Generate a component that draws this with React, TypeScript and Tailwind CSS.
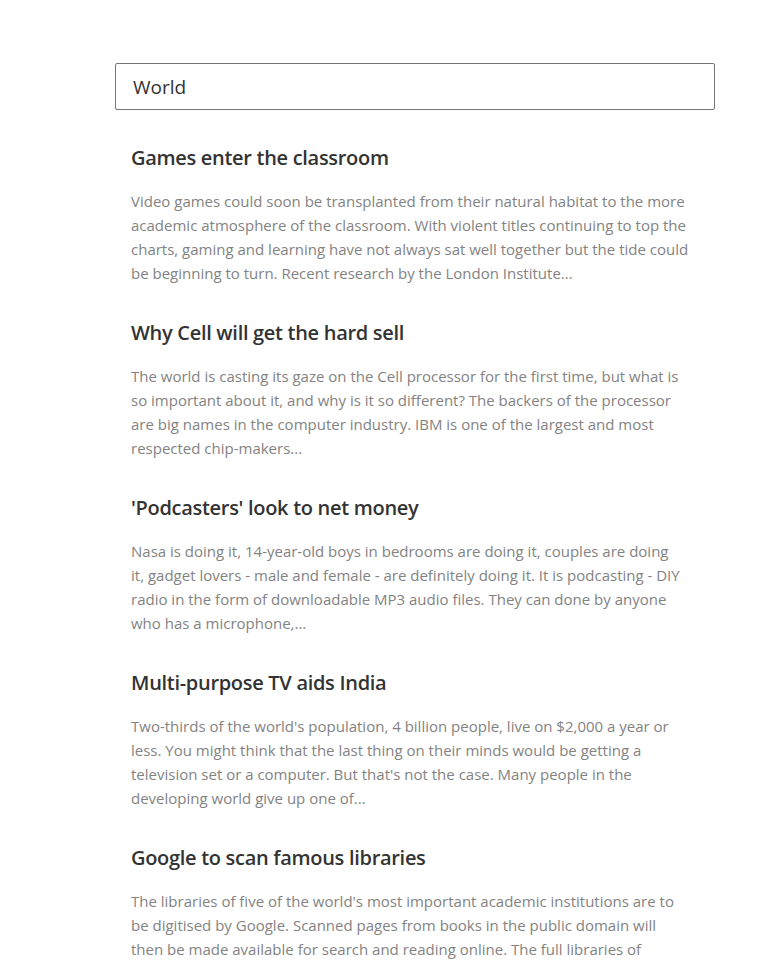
import React from "react";

const articles = [
  {
    title: "Games enter the classroom",
    lines: [
      "Video games could soon be transplanted from their natural habitat to the more",
      "academic atmosphere of the classroom. With violent titles continuing to top the",
      "charts, gaming and learning have not always sat well together but the tide could",
      "be beginning to turn. Recent research by the London Institute...",
    ],
  },
  {
    title: "Why Cell will get the hard sell",
    lines: [
      "The world is casting its gaze on the Cell processor for the first time, but what is",
      "so important about it, and why is it so different? The backers of the processor",
      "are big names in the computer industry. IBM is one of the largest and most",
      "respected chip-makers...",
    ],
  },
  {
    title: "'Podcasters' look to net money",
    lines: [
      "Nasa is doing it, 14-year-old boys in bedrooms are doing it, couples are doing",
      "it, gadget lovers - male and female - are definitely doing it. It is podcasting - DIY",
      "radio in the form of downloadable MP3 audio files. They can done by anyone",
      "who has a microphone,...",
    ],
  },
  {
    title: "Multi-purpose TV aids India",
    lines: [
      "Two-thirds of the world's population, 4 billion people, live on $2,000 a year or",
      "less. You might think that the last thing on their minds would be getting a",
      "television set or a computer. But that's not the case. Many people in the",
      "developing world give up one of...",
    ],
  },
  {
    title: "Google to scan famous libraries",
    lines: [
      "The libraries of five of the world's most important academic institutions are to",
      "be digitised by Google. Scanned pages from books in the public domain will",
      "then be made available for search and reading online. The full libraries of",
      "Michigan and Stanford universities...",
    ],
  },
];

export default function App() {
  return (
    <div
      className="min-h-screen bg-white"
      style={{ fontFamily: '"Open Sans", "Noto Sans", sans-serif' }}
    >
      <div className="ml-[115px] w-[600px] pt-[63px]">
        <input
          defaultValue="World"
          className="block w-full h-[47px] border border-[#767676] rounded-[2px] px-[17px] text-[19px] text-[#333333] outline-none"
        />
        <div className="pt-[34px]">
          {articles.map((a) => (
            <div key={a.title} className="px-4 pb-[34px]">
              <h2 className="text-[20px] leading-[28px] font-semibold tracking-[-0.3px] text-[#333333]">
                {a.title}
              </h2>
              <p className="mt-[17px] text-[15px] leading-[24px] text-[#838383]">
                {a.lines.map((l, i) => (
                  <span key={i} className="block whitespace-nowrap">
                    {l}
                  </span>
                ))}
              </p>
            </div>
          ))}
        </div>
      </div>
    </div>
  );
}
